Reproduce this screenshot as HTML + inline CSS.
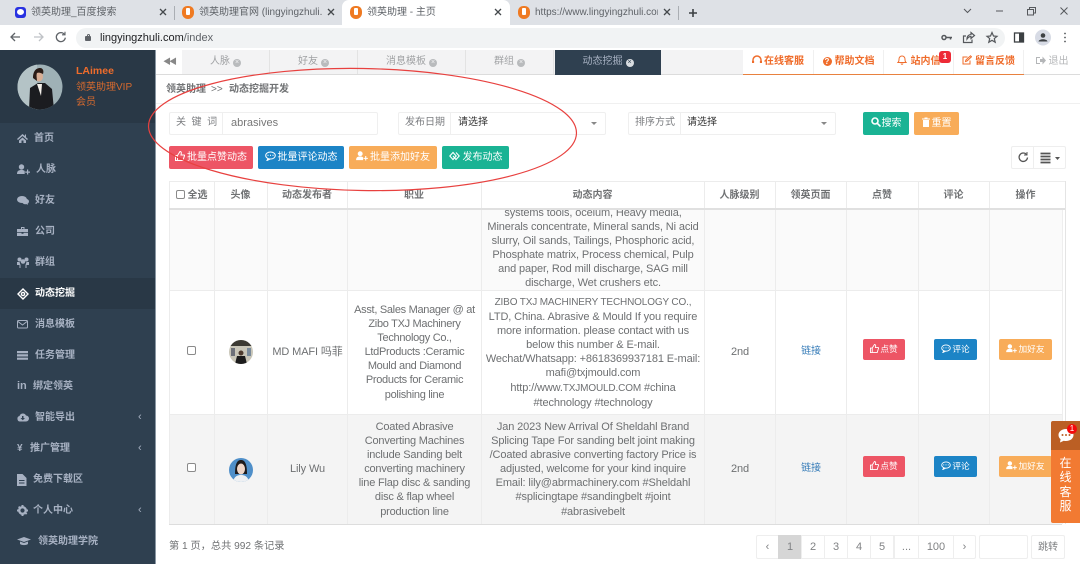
<!DOCTYPE html>
<html lang="zh"><head><meta charset="utf-8"><title>领英助理</title>
<style>
*{box-sizing:border-box}
html,body{margin:0;padding:0;width:1080px;height:564px;overflow:hidden;background:#fff;font-family:"Liberation Sans","Noto Sans CJK SC",sans-serif;font-size:11px;color:#676a6c}
.a{position:absolute;white-space:nowrap}
.tab{position:absolute;top:0;height:25px;font-size:10px;color:#5f6368;line-height:25px;white-space:nowrap;overflow:hidden}
.fav{position:absolute;top:6px;width:12px;height:13px;background:#ef7a22;border-radius:6px 6px 7px 7px}
.fav:after{content:"";position:absolute;left:4px;top:2px;width:4px;height:7px;background:#fff;border-radius:1px}
.x{position:absolute;width:8px;height:8px;top:8px}
.nav{position:absolute;left:0;width:155px;height:31px;color:#a7b1c2;font-weight:bold;font-size:10px;line-height:31px}
.nav svg{position:absolute;left:17px;top:10px;fill:#a7b1c2}
.nav span{position:absolute;top:0}
.nav i{position:absolute;left:138px;top:0;font-style:normal;font-weight:normal;font-size:11px}
.t{position:absolute;top:50px;height:24px;line-height:24px;text-align:center;font-size:10px;color:#a0a2a4;border-right:1px solid #e3e3e3;background:#f3f3f4}
.t b{display:inline-block;width:8px;height:8px;border-radius:50%;background:#b9bbbd;color:#f3f3f4;font-size:7px;line-height:8px;font-weight:normal;margin-left:3px;vertical-align:0}
.top{position:absolute;top:50px;height:24px;line-height:24px;color:#ef6c2b;font-weight:bold;font-size:10px;text-align:center;border-right:1px solid #f0f0f0;white-space:nowrap}
.inp{position:absolute;top:112px;height:23px;background:#fff;border:1px solid #efefef;border-radius:2px}
.lbl{position:absolute;top:112px;height:23px;line-height:22px;color:#7b7d80;font-size:10px;white-space:nowrap}
.btn{position:absolute;color:#fff;border-radius:2px;font-size:10px;text-align:center;white-space:nowrap}
.red{background:#ed5565}.blue{background:#1c84c6}.org{background:#f8ac59}.grn{background:#1ab394}
.sm{font-size:8.7px;height:21px;line-height:21px}
.th{position:absolute;top:182px;height:27px;line-height:27px;text-align:center;font-weight:bold;font-size:10px;color:#707274}
.v{position:absolute;top:181px;width:1px;height:343px;background:#ececec}
.h{position:absolute;left:169px;width:896px;height:1px;background:#ececec}
.c{position:absolute;text-align:center;font-size:11px;line-height:14.1px;color:#6e7072;white-space:nowrap;letter-spacing:-.12px}
.u{font-size:10px;letter-spacing:-.15px}
.cb{position:absolute;width:9px;height:9px;border:1px solid #8a8a8a;border-radius:2px;background:#fff}
.pg{position:absolute;top:535px;height:24px;line-height:23px;text-align:center;border:1px solid #eee;color:#808284;background:#fff;font-size:11px;margin-left:-1px}
</style></head><body>

<!-- Browser chrome -->
<div class="a" style="left:0;top:0;width:1080px;height:25px;background:#dee1e6"></div>
<div class="a" style="left:0;top:25px;width:1080px;height:25px;background:#fff"></div>
<div class="a" style="left:342px;top:0;width:168px;height:25px;background:#fff;border-radius:7px 7px 0 0"></div>

<div class="a" style="left:15px;top:7px;width:11px;height:11px;background:#2932e1;border-radius:3px"></div>
<div class="a" style="left:17px;top:9px;width:7px;height:6px;background:#fff;border-radius:50%"></div>
<div class="tab" style="left:31px;width:120px">领英助理_百度搜索</div>
<svg class="x" style="left:159px" viewBox="0 0 8 8" stroke="#45494d" stroke-width="1.300"><path d="M1 1l6 6M7 1l-6 6"/></svg>
<div class="a" style="left:174px;top:6px;width:1px;height:14px;background:#aaaeb3"></div>

<div class="fav" style="left:182px"></div>
<div class="tab" style="left:199px;width:123px">领英助理官网 (lingyingzhuli.co</div>
<svg class="x" style="left:327px" viewBox="0 0 8 8" stroke="#45494d" stroke-width="1.300"><path d="M1 1l6 6M7 1l-6 6"/></svg>

<div class="fav" style="left:350px"></div>
<div class="tab" style="left:367px;width:120px">领英助理 - 主页</div>
<svg class="x" style="left:494px" viewBox="0 0 8 8" stroke="#45494d" stroke-width="1.300"><path d="M1 1l6 6M7 1l-6 6"/></svg>

<div class="fav" style="left:518px"></div>
<div class="tab" style="left:535px;width:123px">https://www.lingyingzhuli.com</div>
<svg class="x" style="left:663px" viewBox="0 0 8 8" stroke="#45494d" stroke-width="1.300"><path d="M1 1l6 6M7 1l-6 6"/></svg>
<div class="a" style="left:678px;top:6px;width:1px;height:14px;background:#aaaeb3"></div>
<svg class="a" style="left:688px;top:8px" width="10" height="10" stroke="#3c4043" stroke-width="1.600"><path d="M5 1v8M1 5h8"/></svg>

<svg class="a" style="left:940px;top:0" width="140" height="24" fill="none" stroke="#55585c" stroke-width="1"><path d="M24 9l3.500 3.500 3.500-3.500"/><path d="M56 11h7"/><path d="M87.500 9.500h6v5.500h-6zM89.500 9.500v-2h6v5.500h-2"/><path d="M120.500 7.500l7 7M127.500 7.500l-7 7"/></svg>

<svg class="a" style="left:8px;top:29px" width="62" height="16" fill="none" stroke="#5f6368" stroke-width="1.300"><path d="M3 8h9M7 4L3 8l4 4"/><path stroke="#bfc2c6" d="M26 8h9M31 4l4 4-4 4"/><path d="M56.500 5.500a4.500 4.500 0 1 0 .8 3.200"/><path d="M57 2.800v3h-3" stroke-width="1.100"/></svg>
<div class="a" style="left:76px;top:28px;width:929px;height:20px;background:#f1f3f4;border-radius:10px"></div>
<div class="a" style="left:85px;top:36px;width:6px;height:5px;background:#5f6368;border-radius:1px"></div>
<div class="a" style="left:86.500px;top:33.500px;width:3px;height:4px;border:1px solid #5f6368;border-bottom:0;border-radius:2px 2px 0 0"></div>
<div class="a" style="left:100px;top:30px;line-height:16px;font-size:11px;color:#202124">lingyingzhuli.com<span style="color:#5f6368">/index</span></div>
<svg class="a" style="left:936px;top:27px" width="144" height="22" fill="none" stroke="#55585c" stroke-width="1.200">
<circle cx="8" cy="10.500" r="2" stroke-width="1.500"/><path d="M10 10.500h6M14.500 10.500v2" stroke-width="1.500"/>
<g transform="translate(-6)"><path d="M36 9h-2.500v6.500h8.500v-3M37 12c0-3 2-4.500 4-4.500V5.500l3.500 3-3.500 3V9.500c-2 0-3 1-4 2.500z"/></g>
<g transform="translate(-6)"><path d="M62 5.500l1.500 3.500 3.500.3-2.700 2.300.9 3.600-3.200-1.900-3.200 1.900.9-3.600-2.700-2.300 3.500-.3z"/></g>
<g transform="translate(-15)"><rect x="93.500" y="6" width="9" height="9" stroke-width="1.300" stroke="#3c4043"/><rect x="98" y="6" width="4.500" height="9" fill="#3c4043" stroke="none"/></g>
<g transform="translate(-11)"><circle cx="118" cy="10.500" r="8" fill="#d7dbe5" stroke="none"/><circle cx="118" cy="8.500" r="2.300" fill="#3c4043" stroke="none"/><path d="M113.500 14.500c.5-3 8.500-3 9 0z" fill="#3c4043" stroke="none"/></g>
<g transform="translate(-14)"><circle cx="143" cy="6.500" r=".9" fill="#55585c" stroke="none"/><circle cx="143" cy="10.500" r=".9" fill="#55585c" stroke="none"/><circle cx="143" cy="14.500" r=".9" fill="#55585c" stroke="none"/></g></svg>

<!-- Sidebar -->
<div class="a" style="left:0;top:50px;width:155px;height:514px;background:#2f4050"></div>
<div class="a" style="left:0;top:50px;width:155px;height:73px;background:#293846"></div>
<div class="a" style="left:155px;top:50px;width:1px;height:514px;background:#8a97a3"></div>
<svg class="a" style="left:17px;top:64px" width="46" height="46" viewBox="0 0 46 46"><defs><clipPath id="av"><circle cx="23" cy="23" r="22.500"/></clipPath></defs><g clip-path="url(#av)"><rect width="46" height="46" fill="#9fb1b6"/><rect width="20" height="46" fill="#b4c3c6"/><path d="M12 46l1-22 8-5h7l7 6 2 21z" fill="#1b1c20"/><path d="M20 20h5l-1 12z" fill="#f3efe9"/><ellipse cx="22" cy="12.500" rx="4" ry="5" fill="#d8ae95"/><path d="M16 14c0-8 4-10 7-10 3 0 4 3 3 6-2-1-4-2-6-1-1 2 0 6 0 8z" fill="#2a1c17"/></g></svg>
<div class="a" style="left:76px;top:64px;color:#ef6c2b;font-weight:bold;font-size:10.5px;line-height:14px">LAimee</div>
<div class="a" style="left:76px;top:81px;color:#d66a2e;font-size:10px;line-height:14.5px">领英助理VIP<br>会员</div>

<div class="nav" style="top:123px"><svg width="11" height="11" viewBox="0 0 11 11"><path d="M5.500 1L0 6l1 1 4.500-4 4.500 4 1-1-2-1.800V1.500H8V3zM2 7.500V10h2.500V7.500h2V10H9V7.500l-3.500-3z"/></svg><span style="left:34px">首页</span></div>
<div class="nav" style="top:154px"><svg width="13" height="11" viewBox="0 0 13 11"><circle cx="4.500" cy="3" r="2.700"/><path d="M0 10c0-3 1.500-4 4.500-4 1.500 0 2.500.3 3.200 1v3zM10 5.500h1.200v2H13v1.200h-1.800v1.800H10V8.700H8.200V7.500H10z"/></svg><span style="left:36px">人脉</span></div>
<div class="nav" style="top:185px"><svg width="12" height="11" viewBox="0 0 12 11"><ellipse cx="5" cy="4.500" rx="5" ry="3.500"/><ellipse cx="8.500" cy="6.500" rx="3.500" ry="2.800"/><path d="M8 8l3 2-1-3z"/></svg><span style="left:35px">好友</span></div>
<div class="nav" style="top:216px"><svg width="12" height="11" viewBox="0 0 12 11"><path d="M0 3h11v3H0zM0 6.800h4.500v1h2v-1H11V10H0zM4 1h3.500v2h-1V2H5v1H4z"/></svg><span style="left:35px">公司</span></div>
<div class="nav" style="top:247px"><svg width="12" height="12" viewBox="0 0 12 12"><circle cx="2.500" cy="2.500" r="2"/><circle cx="9.500" cy="2.500" r="2"/><circle cx="6" cy="4.500" r="2.300"/><path d="M0 5h2.500l1 3v3h5V8l1-3H12v3H9.500v3H2.500V8H0z"/></svg><span style="left:35px">群组</span></div>
<div class="a" style="left:0;top:278px;width:155px;height:31px;background:#293846"></div>
<div class="nav" style="top:278px;color:#fff"><svg width="12" height="12" viewBox="0 0 12 12" style="fill:none;stroke:#fff;stroke-width:1.400"><path d="M6 1l5 5-5 5-5-5z"/><circle cx="6" cy="6" r="1.600"/></svg><span style="left:35px">动态挖掘</span></div>
<div class="nav" style="top:309px"><svg width="12" height="11" viewBox="0 0 12 11" style="fill:none;stroke:#a7b1c2"><rect x=".5" y="1.500" width="10" height="7.500" rx="1"/><path d="M1 2.500l4.500 3.500L10 2.500"/></svg><span style="left:35px">消息模板</span></div>
<div class="nav" style="top:340px"><svg width="12" height="11" viewBox="0 0 12 11"><path d="M0 1h11v2.200H0zM0 4.300h11v2.200H0zM0 7.600h11v2.200H0z"/></svg><span style="left:35px">任务管理</span></div>
<div class="nav" style="top:371px"><span style="left:17px;font-size:11px;font-family:'Liberation Sans',sans-serif">in</span><span style="left:33px">绑定领英</span></div>
<div class="nav" style="top:402px"><svg width="12" height="11" viewBox="0 0 12 11"><path d="M3 9.500a2.800 2.800 0 0 1-.5-5.500 3.500 3.500 0 0 1 6.500-.5A3 3 0 0 1 9 9.500z"/><path d="M5 4h1.500v2H8L5.750 8.300 3.500 6H5z" fill="#2f4050"/></svg><span style="left:35px">智能导出</span><i>‹</i></div>
<div class="nav" style="top:433px"><span style="left:17px;font-size:10px">¥</span><span style="left:30px">推广管理</span><i>‹</i></div>
<div class="nav" style="top:464px"><svg width="10" height="12" viewBox="0 0 10 12"><path d="M0 0h5.500L9.500 4v8H0zM2 6v1h5.500V6zM2 8.500v1h5.500v-1z" fill-rule="evenodd"/></svg><span style="left:33px">免费下载区</span></div>
<div class="nav" style="top:495px"><svg width="11" height="11" viewBox="0 0 11 11"><circle cx="5.500" cy="5.500" r="3.300" fill="none" stroke="#a7b1c2" stroke-width="2.400"/><path d="M4.500 0h2v2h-2zM4.500 9h2v2h-2zM0 4.500h2v2H0zM9 4.500h2v2H9zM1 2.300l1.300-1.300 1 1-1.300 1.300zM8 8.700l1.300-1.300 1 1L9 9.700z"/></svg><span style="left:33px">个人中心</span><i>‹</i></div>
<div class="nav" style="top:526px"><svg width="14" height="11" viewBox="0 0 14 11"><path d="M0 3.500L7 1l7 2.500L7 6zM3 5.500L7 7l4-1.500V8c-2 1.500-6 1.500-8 0z"/></svg><span style="left:38px">领英助理学院</span></div>

<!-- Tabs -->
<div class="a" style="left:156px;top:50px;width:924px;height:24px;background:#f3f3f4"></div>
<div class="a" style="left:156px;top:74px;width:924px;height:1px;background:#dcdcdc"></div>
<div class="a" style="left:156px;top:50px;width:26px;height:24px;background:#fff;color:#888;font-size:8px;line-height:24px;text-align:center;letter-spacing:-2px">◀◀</div>
<div class="t" style="left:182px;width:88px">人脉<b>×</b></div>
<div class="t" style="left:270px;width:88px">好友<b>×</b></div>
<div class="t" style="left:358px;width:108px">消息模板<b>×</b></div>
<div class="t" style="left:466px;width:88px">群组<b>×</b></div>
<div class="t" style="left:555px;width:106px;background:#2f4050;color:#a7b1c2;height:25px;border:0">动态挖掘<b style="background:#d8dce0;color:#2f4050">×</b></div>
<div class="a" style="left:743px;top:50px;width:337px;height:24px;background:#fff"></div>
<div class="a" style="left:743px;top:74px;width:281px;height:1px;background:#e8813f"></div>
<div class="top" style="left:743px;width:71px"><svg width="10" height="10" viewBox="0 0 10 10" style="vertical-align:-1px;margin-right:2px" fill="none" stroke="#ef6c2b" stroke-width="1.500"><path d="M1 7V5a4 4 0 0 1 8 0v2"/><path d="M1 6v2M9 6v2" stroke-width="2.200"/></svg>在线客服</div>
<div class="top" style="left:814px;width:70px"><span style="display:inline-block;width:9px;height:9px;background:#ef6c2b;border-radius:50%;color:#fff;font-size:8px;line-height:9px;margin-right:3px;vertical-align:0">?</span>帮助文档</div>
<div class="top" style="left:884px;width:70px"><svg width="10" height="11" viewBox="0 0 10 11" style="vertical-align:-1px;margin-right:4px" fill="none" stroke="#ef6c2b"><path d="M1 8.500c1.200-1 1-2 1-3.500a3 3 0 0 1 6 0c0 1.500-.2 2.500 1 3.500zM4 9.500c.3 1 1.700 1 2 0"/></svg>站内信</div>
<div class="a" style="left:939px;top:51px;width:12px;height:12px;background:#ed2a36;border-radius:3px;color:#fff;font-size:8px;line-height:12px;text-align:center;font-weight:bold">1</div>
<div class="top" style="left:954px;width:70px"><svg width="10" height="10" viewBox="0 0 10 10" style="vertical-align:-1px;margin-right:3px" fill="none" stroke="#ef6c2b"><path d="M8 5.500V9H1V2h4.500M3.500 6.500l.4-1.500L8.500.8l1 1L5 6z"/></svg>留言反馈</div>
<div class="top" style="left:1024px;width:56px;color:#b4b6b8;font-weight:normal;border:0"><svg width="10" height="9" viewBox="0 0 10 9" style="margin-right:3px;vertical-align:-1px"><path d="M0 1h4v1H1v5h3v1H0zM4 3h2.500V.5L10 4.500 6.500 8.500V6H4z" fill="#b4b6b8"/></svg>退出</div>

<!-- Breadcrumb -->
<div class="a" style="left:166px;top:83px;font-weight:bold;font-size:10px;line-height:14px;color:#707274">领英助理</div>
<div class="a" style="left:211px;top:83px;font-size:10px;line-height:14px;color:#707274">&gt;&gt;</div>
<div class="a" style="left:229px;top:83px;font-weight:bold;font-size:10px;line-height:14px;color:#707274">动态挖掘开发</div>
<div class="a" style="left:156px;top:103px;width:924px;height:1px;background:#f0f0f0"></div>

<!-- Form -->
<div class="inp" style="left:169px;width:209px"></div>
<div class="a" style="left:222px;top:113px;width:1px;height:21px;background:#efefef"></div>
<div class="lbl" style="left:176px">关&nbsp;&nbsp;键&nbsp;&nbsp;词</div>
<div class="lbl" style="left:231px;color:#777;font-size:11px">abrasives</div>
<div class="inp" style="left:398px;width:208px"></div>
<div class="a" style="left:450px;top:113px;width:1px;height:21px;background:#efefef"></div>
<div class="lbl" style="left:405px">发布日期</div>
<div class="lbl" style="left:458px;color:#333">请选择</div>
<div class="a" style="left:591px;top:122px;border:3px solid transparent;border-top-color:#888"></div>
<div class="inp" style="left:628px;width:208px"></div>
<div class="a" style="left:680px;top:113px;width:1px;height:21px;background:#efefef"></div>
<div class="lbl" style="left:635px">排序方式</div>
<div class="lbl" style="left:687px;color:#333">请选择</div>
<div class="a" style="left:821px;top:122px;border:3px solid transparent;border-top-color:#888"></div>
<div class="btn grn" style="left:863px;top:112px;width:46px;height:23px;line-height:23px"><svg width="10" height="10" viewBox="0 0 10 10" fill="none" stroke="#fff" stroke-width="1.600" style="vertical-align:-1px;margin-right:1px"><circle cx="4" cy="4" r="3"/><path d="M6.300 6.300L9.500 9.500"/></svg>搜索</div>
<div class="btn org" style="left:914px;top:112px;width:45px;height:23px;line-height:23px"><svg width="8" height="10" viewBox="0 0 8 10" style="vertical-align:-1px;margin-right:2px"><path d="M0 1.500h2.500V.5h3v1H8v1H0zM1 3h6v7H1z" fill="#fff"/></svg>重置</div>

<!-- Buttons -->
<div class="btn red" style="left:169px;top:146px;width:84px;height:23px;line-height:23px"><svg width="10" height="10" viewBox="0 0 10 10" style="vertical-align:-1px;margin-right:2px" fill="none" stroke="#fff"><path d="M.5 4.500h2v5h-2zM2.500 4.500L5 .5c1.500 0 1.500 1.500 1 3.500h3c.7 0 .7 1 .2 1.500L8 9.500H2.500"/></svg>批量点赞动态</div>
<div class="btn blue" style="left:258px;top:146px;width:86px;height:23px;line-height:23px"><svg width="11" height="10" viewBox="0 0 11 10" style="vertical-align:-1px;margin-right:2px" fill="none" stroke="#fff"><ellipse cx="5.500" cy="4.500" rx="4.800" ry="3.500"/><path d="M3 3.700v1.200M5.500 3.700v1.200M8 3.700v1.200M3 7.500L2 9.500l3-1.500"/></svg>批量评论动态</div>
<div class="btn org" style="left:349px;top:146px;width:88px;height:23px;line-height:23px"><svg width="12" height="10" viewBox="0 0 13 11" style="vertical-align:-1px;margin-right:2px"><circle cx="4.500" cy="3" r="2.700" fill="#fff"/><path d="M0 10c0-3 1.500-4 4.500-4 1.500 0 2.500.3 3.200 1v3zM10 5.500h1.200v2H13v1.200h-1.800v1.800H10V8.700H8.200V7.500H10z" fill="#fff"/></svg>批量添加好友</div>
<div class="btn grn" style="left:442px;top:146px;width:67px;height:23px;line-height:23px"><svg width="11" height="10" viewBox="0 0 11 10" style="vertical-align:-1px;margin-right:3px" fill="none" stroke="#fff" stroke-width="1.100"><path d="M4 1.500L.8 5 4 8.500 7.200 5zM7 1.500L10.200 5 7 8.500 4 5"/></svg>发布动态</div>

<div class="a" style="left:1011px;top:146px;width:55px;height:23px;border:1px solid #eee;border-radius:2px"></div>
<div class="a" style="left:1033px;top:147px;width:1px;height:21px;background:#eee"></div>
<svg class="a" style="left:1016px;top:151px" width="50" height="14" fill="none" stroke="#555" stroke-width="1.300"><path d="M10.500 3.500a4.200 4.200 0 1 0 1 3"/><path d="M11 1v3H8" stroke-width="1"/><path d="M24.500 2.500h10M24.500 5.500h10M24.500 8.500h10M24.500 11.500h10" stroke-width="1.800"/><path d="M39 6h5l-2.500 3z" fill="#555" stroke="none"/></svg>

<!-- Table -->
<div class="a" style="left:170px;top:182px;width:895px;height:27px;background:#fff"></div>
<div class="a" style="left:170px;top:414px;width:895px;height:110px;background:#f4f4f4"></div>
<div class="a" style="left:170px;top:209px;width:895px;height:81px;background:#fafafa"></div>
<div class="h" style="top:181px"></div>
<div class="h" style="top:290px"></div>
<div class="h" style="top:414px"></div>
<div class="a" style="left:169px;top:524px;width:896px;height:1px;background:#ddd"></div>
<div class="v" style="left:169px"></div><div class="v" style="left:214px"></div><div class="v" style="left:267px"></div><div class="v" style="left:347px"></div><div class="v" style="left:481px"></div><div class="v" style="left:704px"></div><div class="v" style="left:775px"></div><div class="v" style="left:846px"></div><div class="v" style="left:918px"></div><div class="v" style="left:989px"></div>
<div class="a" style="left:1062px;top:210px;width:3px;height:315px;background:#fff"></div>
<div class="a" style="left:1062px;top:210px;width:1px;height:314px;background:#eee"></div>
<div class="v" style="left:1065px;background:#e4e4e4"></div>
<div class="a" style="left:169px;top:208px;width:896px;height:2px;background:#e0e0e0"></div>

<div class="cb" style="left:176px;top:190px"></div>
<div class="th" style="left:187px;width:21px">全选</div>
<div class="th" style="left:214px;width:53px">头像</div>
<div class="th" style="left:267px;width:80px">动态发布者</div>
<div class="th" style="left:347px;width:134px">职业</div>
<div class="th" style="left:481px;width:223px">动态内容</div>
<div class="th" style="left:704px;width:71px">人脉级别</div>
<div class="th" style="left:775px;width:71px">领英页面</div>
<div class="th" style="left:846px;width:72px">点赞</div>
<div class="th" style="left:918px;width:71px">评论</div>
<div class="th" style="left:989px;width:73px">操作</div>

<div class="a" style="left:482px;top:210px;width:222px;height:80px;overflow:hidden">
<div class="c" style="left:0;top:-4px;width:222px">systems tools, ocelum, Heavy media,<br>Minerals concentrate, Mineral sands, Ni acid<br>slurry, Oil sands, Tailings, Phosphoric acid,<br>Phosphate matrix, Process chemical, Pulp<br>and paper, Rod mill discharge, SAG mill<br>discharge, Wet crushers etc.</div></div>

<div class="cb" style="left:187px;top:346px"></div>
<svg class="a" style="left:229px;top:340px" width="24" height="24" viewBox="0 0 24 24"><defs><clipPath id="m"><circle cx="12" cy="12" r="12"/></clipPath></defs><g clip-path="url(#m)"><rect width="24" height="24" fill="#c9c6b8"/><rect width="24" height="6" fill="#3c3a33"/><rect x="2" y="8" width="4" height="8" fill="#6d7078"/><rect x="18" y="8" width="4" height="8" fill="#7a8a9a"/><circle cx="12" cy="13" r="2.500" fill="#4e3b2e"/><path d="M6 24l2-8h8l2 8z" fill="#1c1c1c"/></g></svg>
<div class="c" style="left:267px;top:345px;width:81px">MD MAFI 吗菲</div>
<div class="c" style="left:348px;top:303px;width:133px;letter-spacing:-.3px">Asst, Sales Manager @ at<br>Zibo TXJ Machinery<br>Technology Co.,<br>LtdProducts :Ceramic<br>Mould and Diamond<br>Products for Ceramic<br>polishing line</div>
<div class="c" style="left:482px;top:295px;width:222px"><span class="u">ZIBO TXJ MACHINERY TECHNOLOGY CO.,</span><br>LTD, China. Abrasive &amp; Mould If you require<br>more information. please contact with us<br>below this number &amp; E-mail.<br>Wechat/Whatsapp: +8618369937181 E-mail:<br>mafi@txjmould.com<br>http://www.<span class="u">TXJMOULD.COM</span> #china<br>#technology #technology</div>
<div class="c" style="left:705px;top:345px;width:70px">2nd</div>
<div class="c" style="left:776px;top:345px;width:70px;color:#337ab7;font-size:10px">链接</div>

<div class="cb" style="left:187px;top:463px"></div>
<svg class="a" style="left:229px;top:458px" width="24" height="24" viewBox="0 0 24 24"><defs><clipPath id="l"><circle cx="12" cy="12" r="12"/></clipPath></defs><g clip-path="url(#l)"><rect width="24" height="24" fill="#4f8fc9"/><path d="M6 16c0-12 3-14 6-14s6 2 6 14z" fill="#1d1a1c"/><ellipse cx="12" cy="11" rx="4" ry="5.500" fill="#efd6c8"/><path d="M4 24c1-6 5-7 8-7s7 1 8 7z" fill="#eef0f3"/></g></svg>
<div class="c" style="left:267px;top:462px;width:81px">Lily Wu</div>
<div class="c" style="left:348px;top:420px;width:133px;letter-spacing:-.2px">Coated Abrasive<br>Converting Machines<br>include Sanding belt<br>converting machinery<br>line Flap disc &amp; sanding<br>disc &amp; flap wheel<br>production line</div>
<div class="c" style="left:482px;top:420px;width:222px">Jan 2023 New Arrival Of Sheldahl Brand<br>Splicing Tape For sanding belt joint making<br>/Coated abrasive converting factory Price is<br>adjusted, welcome for your kind inquire<br>Email: lily@abrmachinery.com #Sheldahl<br>#splicingtape #sandingbelt #joint<br>#abrasivebelt</div>
<div class="c" style="left:705px;top:462px;width:70px">2nd</div>
<div class="c" style="left:776px;top:462px;width:70px;color:#337ab7;font-size:10px">链接</div>

<div class="btn red sm" style="left:863px;top:339px;width:42px"><svg width="9" height="9" viewBox="0 0 10 10" style="vertical-align:-1px;margin-right:1px" fill="none" stroke="#fff"><path d="M.5 4.500h2v5h-2zM2.500 4.500L5 .5c1.500 0 1.500 1.500 1 3.500h3c.7 0 .7 1 .2 1.500L8 9.500H2.500"/></svg>点赞</div>
<div class="btn blue sm" style="left:934px;top:339px;width:43px"><svg width="10" height="9" viewBox="0 0 11 10" style="vertical-align:-1px;margin-right:1px" fill="none" stroke="#fff"><ellipse cx="5.500" cy="4.500" rx="4.800" ry="3.500"/><path d="M3 3.700v1.200M5.500 3.700v1.200M8 3.700v1.200M3 7.500L2 9.500l3-1.500"/></svg>评论</div>
<div class="btn org sm" style="left:999px;top:339px;width:53px"><svg width="11" height="9" viewBox="0 0 13 11" style="vertical-align:-1px;margin-right:1px"><circle cx="4.500" cy="3" r="2.700" fill="#fff"/><path d="M0 10c0-3 1.500-4 4.500-4 1.500 0 2.500.3 3.200 1v3zM10 5.500h1.200v2H13v1.200h-1.800v1.800H10V8.700H8.200V7.500H10z" fill="#fff"/></svg>加好友</div>

<div class="btn red sm" style="left:863px;top:456px;width:42px"><svg width="9" height="9" viewBox="0 0 10 10" style="vertical-align:-1px;margin-right:1px" fill="none" stroke="#fff"><path d="M.5 4.500h2v5h-2zM2.500 4.500L5 .5c1.500 0 1.500 1.500 1 3.500h3c.7 0 .7 1 .2 1.500L8 9.500H2.500"/></svg>点赞</div>
<div class="btn blue sm" style="left:934px;top:456px;width:43px"><svg width="10" height="9" viewBox="0 0 11 10" style="vertical-align:-1px;margin-right:1px" fill="none" stroke="#fff"><ellipse cx="5.500" cy="4.500" rx="4.800" ry="3.500"/><path d="M3 3.700v1.200M5.500 3.700v1.200M8 3.700v1.200M3 7.500L2 9.500l3-1.500"/></svg>评论</div>
<div class="btn org sm" style="left:999px;top:456px;width:53px"><svg width="11" height="9" viewBox="0 0 13 11" style="vertical-align:-1px;margin-right:1px"><circle cx="4.500" cy="3" r="2.700" fill="#fff"/><path d="M0 10c0-3 1.500-4 4.500-4 1.500 0 2.500.3 3.200 1v3zM10 5.500h1.200v2H13v1.200h-1.800v1.800H10V8.700H8.200V7.500H10z" fill="#fff"/></svg>加好友</div>

<!-- Pagination -->
<div class="a" style="left:169px;top:540px;font-size:10.2px;line-height:14px;color:#707274">第 1 页，总共 992 条记录</div>
<div class="pg" style="left:757px;width:23px;border-radius:2px 0 0 2px">‹</div>
<div class="pg" style="left:779px;width:24px;background:#d6d6d6;border-color:#d6d6d6">1</div>
<div class="pg" style="left:802px;width:24px">2</div>
<div class="pg" style="left:825px;width:24px">3</div>
<div class="pg" style="left:848px;width:24px">4</div>
<div class="pg" style="left:871px;width:24px">5</div>
<div class="pg" style="left:895px;width:25px">...</div>
<div class="pg" style="left:919px;width:36px">100</div>
<div class="pg" style="left:954px;width:23px;border-radius:0 2px 2px 0">›</div>
<div class="pg" style="left:980px;width:49px;border-radius:2px"></div>
<div class="pg" style="left:1032px;width:34px;border-radius:2px;font-size:10px">跳转</div>

<!-- Floating chat -->
<div class="a" style="left:1051px;top:421px;width:29px;height:29px;background:#bb5f24;border-radius:2px 0 0 0"></div>
<div class="a" style="left:1051px;top:450px;width:29px;height:73px;background:#f27a32;border-radius:0 0 0 2px;color:#fff;font-size:12px;line-height:14.300px;text-align:center;padding-top:6px;white-space:normal">在<br>线<br>客<br>服</div>
<svg class="a" style="left:1057px;top:427px" width="18" height="17" viewBox="0 0 18 17"><path d="M9 2c4.200 0 7.500 2.500 7.500 6s-3.300 6-7.500 6c-.8 0-1.500-.1-2.200-.3L3 15.500l.6-3.200C2.300 11.200 1.500 9.700 1.500 8 1.500 4.500 4.800 2 9 2z" fill="#fff"/><circle cx="5.500" cy="8" r="1" fill="#bb5f24"/><circle cx="9" cy="8" r="1" fill="#bb5f24"/><circle cx="12.500" cy="8" r="1" fill="#bb5f24"/></svg>
<div class="a" style="left:1067px;top:424px;width:10px;height:10px;background:#f40a0a;border-radius:50%;color:#fff;font-size:8px;line-height:10px;text-align:center">1</div>

<!-- Hand-drawn ellipse -->
<svg class="a" style="left:0;top:0;pointer-events:none" width="1080" height="564"><ellipse cx="362.500" cy="129.500" rx="214" ry="61" fill="none" stroke="#e8413f" stroke-width="1.200" transform="rotate(1 362 129.500)"/></svg>

</body></html>
